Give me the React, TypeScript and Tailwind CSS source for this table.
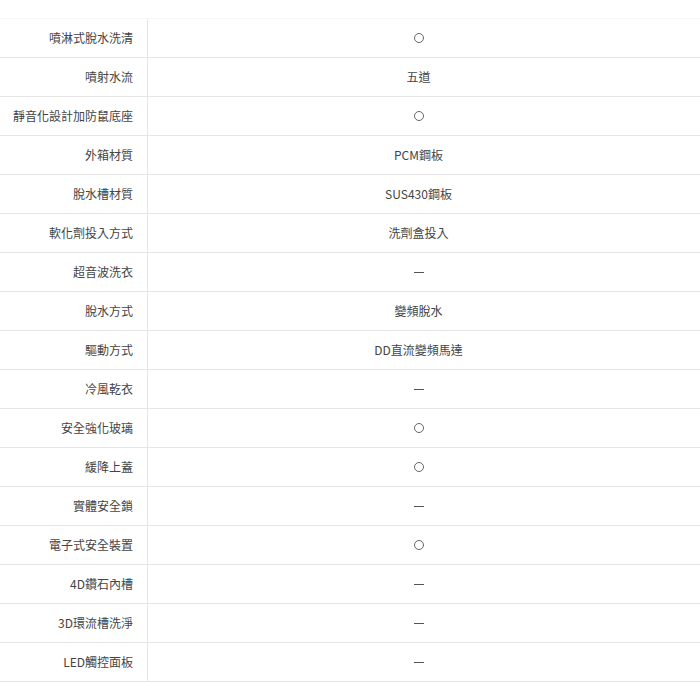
const specs: [string, string][] = [
  ["噴淋式脫水洗清", "○"],
  ["噴射水流", "五道"],
  ["靜音化設計加防鼠底座", "○"],
  ["外箱材質", "PCM鋼板"],
  ["脫水槽材質", "SUS430鋼板"],
  ["軟化劑投入方式", "洗劑盒投入"],
  ["超音波洗衣", "－"],
  ["脫水方式", "變頻脫水"],
  ["驅動方式", "DD直流變頻馬達"],
  ["冷風乾衣", "－"],
  ["安全強化玻璃", "○"],
  ["緩降上蓋", "○"],
  ["實體安全鎖", "－"],
  ["電子式安全裝置", "○"],
  ["4D鑽石內槽", "－"],
  ["3D環流槽洗淨", "－"],
  ["LED觸控面板", "－"],
];

const App = () => {
  return (
    <div
      className="w-[700px] h-[700px] bg-white pt-[18px] text-[12px] text-[#444]"
      style={{ fontFamily: '"Noto Sans CJK TC", "Noto Sans", sans-serif' }}
    >
      <div className="border-t border-[#f6f6f6]">
        {specs.map(([label, value]) => (
          <div key={label} className="flex h-[39px] border-b border-[#e6e6e6]">
            <div className="w-[148px] flex items-center justify-end pr-[14px] border-r border-[#e6e6e6]">
              {label}
            </div>
            <div className="flex-1 flex items-center justify-center pr-[11px]">
              {value === "○" ? (
                <span className="inline-block w-[10px] h-[10px] rounded-full border-[1.5px] border-[#666]" />
              ) : value === "－" ? (
                <span className="inline-block w-[10px] h-px bg-[#555]" />
              ) : (
                value
              )}
            </div>
          </div>
        ))}
      </div>
    </div>
  );
};

export default App;
